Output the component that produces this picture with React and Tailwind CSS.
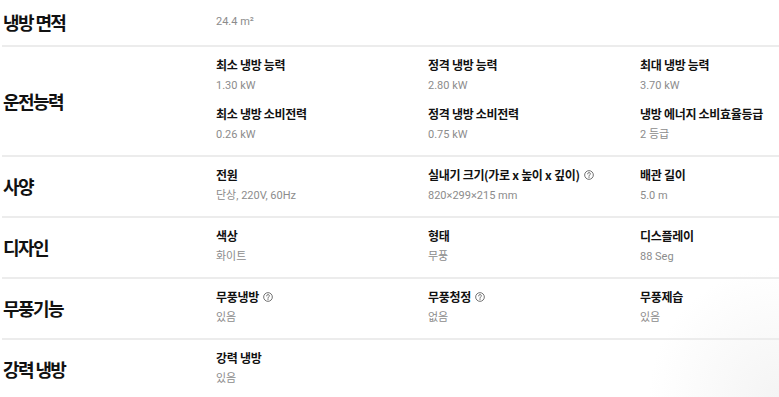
import React from 'react';

const font = { fontFamily: '"Noto Sans CJK KR", "Noto Sans", sans-serif' };
const valueFont = { fontFamily: 'Roboto, "Noto Sans CJK KR", sans-serif' };

const sections = [
    { title: '냉방 면적', single: '24.4 m²' },
    {
        title: '운전능력',
        items: [
            { label: '최소 냉방 능력', value: '1.30 kW' },
            { label: '정격 냉방 능력', value: '2.80 kW' },
            { label: '최대 냉방 능력', value: '3.70 kW' },
            { label: '최소 냉방 소비전력', value: '0.26 kW' },
            { label: '정격 냉방 소비전력', value: '0.75 kW' },
            { label: '냉방 에너지 소비효율등급', value: '2 등급' },
        ],
    },
    {
        title: '사양',
        items: [
            { label: '전원', value: '단상, 220V, 60Hz' },
            { label: '실내기 크기(가로 x 높이 x 깊이)', value: '820×299×215 mm', help: true },
            { label: '배관 길이', value: '5.0 m' },
        ],
    },
    {
        title: '디자인',
        items: [
            { label: '색상', value: '화이트' },
            { label: '형태', value: '무풍' },
            { label: '디스플레이', value: '88 Seg' },
        ],
    },
    {
        title: '무풍기능',
        items: [
            { label: '무풍냉방', value: '있음', help: true },
            { label: '무풍청정', value: '없음', help: true },
            { label: '무풍제습', value: '있음' },
        ],
    },
    {
        title: '강력 냉방',
        items: [{ label: '강력 냉방', value: '있음' }],
        last: true,
    },
];

function HelpIcon() {
    return (
        <svg className="ml-[4px] w-[10px] h-[10px] text-[#555]" viewBox="0 0 12 12" fill="none">
            <circle cx="6" cy="6" r="5.2" stroke="currentColor" strokeWidth="1" />
            <path d="M4.4 4.7a1.6 1.6 0 1 1 2.3 1.4c-.5.25-.7.5-.7 1V7.6" stroke="currentColor" strokeWidth="1" strokeLinecap="round" />
            <circle cx="6" cy="9.1" r="0.6" fill="currentColor" />
        </svg>
    );
}

function Item({ label, value, help }) {
    return (
        <div className="flex flex-col">
            <div className="flex items-center h-[16px] text-[12px] leading-[16px] font-bold text-[#111] tracking-[-0.3px]">
                {label}
                {help && <HelpIcon />}
            </div>
            <div className="mt-[5px] h-[16px] text-[11px] leading-[16px] text-[#8c8c8c]" style={valueFont}>
                {value}
            </div>
        </div>
    );
}

export default function App() {
    return (
        <div
            className="w-[779px] h-[397px] overflow-hidden bg-white bg-[radial-gradient(circle_at_100%_100%,#f4f4f4_0px,#ffffff_130px)]"
            style={font}
        >
            <div className="ml-[2px]">
                {sections.map((s) => (
                    <div
                        key={s.title}
                        className={`flex ${s.last ? '' : 'border-b-2 border-[#ececec]'}`}
                    >
                        <div className="w-[214px] shrink-0 flex items-center pl-[1px] text-[18px] font-bold text-[#111] tracking-[-1.6px]">
                            {s.title}
                        </div>
                        {s.single ? (
                            <div className="h-[45px] flex items-center text-[11px] text-[#8c8c8c]" style={valueFont}>
                                {s.single}
                            </div>
                        ) : (
                            <div className="grid grid-cols-[212px_212px_140px] gap-y-[12px] pt-[10px] pb-[12px]">
                                {s.items.map((it) => (
                                    <Item key={it.label} {...it} />
                                ))}
                            </div>
                        )}
                    </div>
                ))}
            </div>
        </div>
    );
}
